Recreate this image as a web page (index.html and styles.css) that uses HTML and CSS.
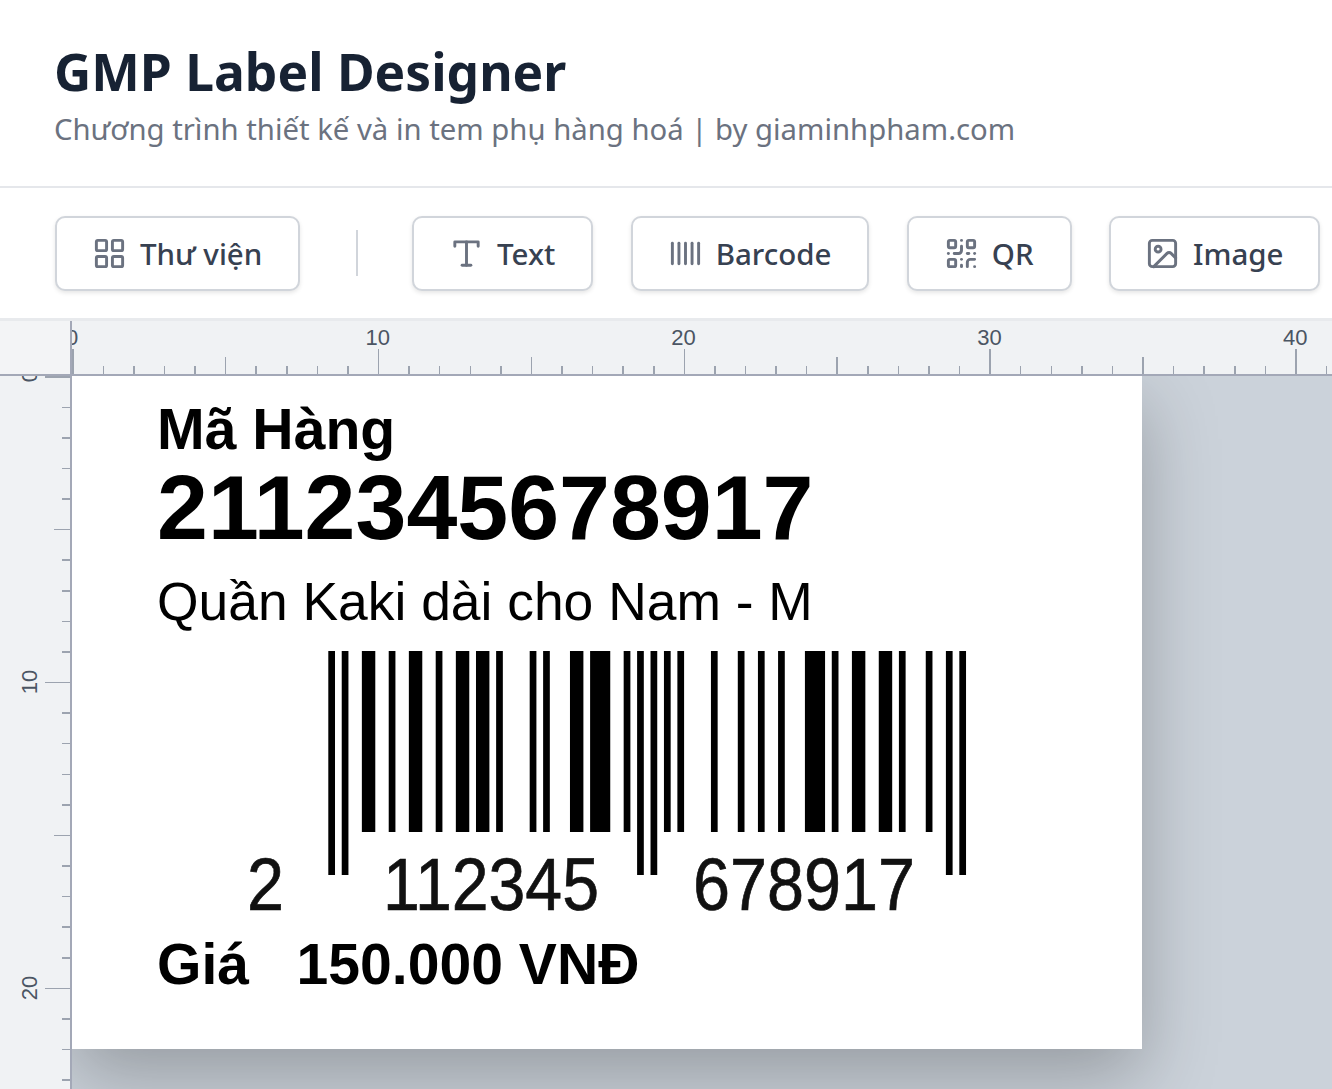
FILE: index.html
```html
<!DOCTYPE html>
<html lang="vi">
<head>
<meta charset="utf-8">
<title>GMP Label Designer</title>
<link rel="stylesheet" href="styles.css">
</head>
<body>
<div class="app">
  <header class="header">
    <h1 class="title">GMP Label Designer</h1>
    <p class="subtitle">Chương trình thiết kế và in tem phụ hàng hoá | by giaminhpham.com</p>
  </header>
  <nav class="toolbar">
    <button class="tool">
      <svg class="icon" viewBox="0 0 24 24"><rect x="3" y="3" width="7" height="7" rx="1"/><rect x="14" y="3" width="7" height="7" rx="1"/><rect x="14" y="14" width="7" height="7" rx="1"/><rect x="3" y="14" width="7" height="7" rx="1"/></svg>
      Thư viện
    </button>
    <span class="divider"></span>
    <button class="tool">
      <svg class="icon" viewBox="0 0 24 24"><path d="M4 7V4h16v3"/><path d="M9 20h6"/><path d="M12 4v16"/></svg>
      Text
    </button>
    <button class="tool">
      <svg class="icon" viewBox="0 0 24 24"><path d="M3 5v14"/><path d="M7.500 5v14"/><path d="M12 5v14"/><path d="M16.500 5v14"/><path d="M21 5v14"/></svg>
      Barcode
    </button>
    <button class="tool">
      <svg class="icon" viewBox="0 0 24 24"><rect x="3" y="3" width="5" height="5" rx="1"/><rect x="16" y="3" width="5" height="5" rx="1"/><rect x="3" y="16" width="5" height="5" rx="1"/><path d="M21 16h-3a2 2 0 0 0-2 2v3"/><path d="M21 21v.01"/><path d="M12 7v3a2 2 0 0 1-2 2H7"/><path d="M3 12h.01"/><path d="M12 3h.01"/><path d="M12 16v.01"/><path d="M16 12h1"/><path d="M21 12v.01"/><path d="M12 21v-1"/></svg>
      QR
    </button>
    <button class="tool tool-image">
      <svg class="icon" viewBox="0 0 24 24"><rect x="3" y="3" width="18" height="18" rx="2"/><circle cx="9" cy="9" r="2"/><path d="m21 15-3.086-3.086a2 2 0 0 0-2.828 0L6 21"/></svg>
      Image
    </button>
  </nav>
  <main class="workspace">
    <div class="corner"></div>
    <div class="ruler-top">
      <div class="hcell"><span>0</span></div>
      <div class="hcell"><span>10</span></div>
      <div class="hcell"><span>20</span></div>
      <div class="hcell"><span>30</span></div>
      <div class="hcell"><span>40</span></div>
    </div>
    <div class="ruler-left">
      <div class="vcell"><span>0</span></div>
      <div class="vcell"><span>10</span></div>
      <div class="vcell"><span>20</span></div>
    </div>
    <div class="canvas">
      <div class="label">
        <div class="el el-name">Mã Hàng</div>
        <div class="el el-code">2112345678917</div>
        <div class="el el-desc">Quần Kaki dài cho Nam - M</div>
        <svg class="el el-barcode" width="1000" height="262" viewBox="0 0 1000 262">
          <g transform="translate(256.300 0) scale(6.713 1)">
            <rect x="0" width="1" height="224"/><rect x="2" width="1" height="224"/>
            <rect x="5" width="2" height="181"/><rect x="9" width="1" height="181"/><rect x="12" width="2" height="181"/><rect x="16" width="1" height="181"/><rect x="19" width="2" height="181"/><rect x="22" width="2" height="181"/><rect x="25" width="1" height="181"/><rect x="30" width="1" height="181"/><rect x="32" width="1" height="181"/><rect x="36" width="2" height="181"/><rect x="39" width="3" height="181"/><rect x="44" width="1" height="181"/>
            <rect x="46" width="1" height="224"/><rect x="48" width="1" height="224"/>
            <rect x="50" width="1" height="181"/><rect x="52" width="1" height="181"/><rect x="57" width="1" height="181"/><rect x="61" width="1" height="181"/><rect x="64" width="1" height="181"/><rect x="67" width="1" height="181"/><rect x="71" width="3" height="181"/><rect x="75" width="1" height="181"/><rect x="78" width="2" height="181"/><rect x="82" width="2" height="181"/><rect x="85" width="1" height="181"/><rect x="89" width="1" height="181"/>
            <rect x="92" width="1" height="224"/><rect x="94" width="1" height="224"/>
          </g>
          <text class="bc-digits" x="175" y="259" textLength="37" lengthAdjust="spacingAndGlyphs">2</text>
          <text class="bc-digits" x="311" y="259" textLength="216" lengthAdjust="spacingAndGlyphs">112345</text>
          <text class="bc-digits" x="621" y="259" textLength="222" lengthAdjust="spacingAndGlyphs">678917</text>
        </svg>
        <div class="el el-price">Giá   150.000 VNĐ</div>
      </div>
    </div>
  </main>
</div>
</body>
</html>
```
FILE: styles.css
```css
* { box-sizing: border-box; }
html, body { margin: 0; height: 100%; overflow: hidden; background: #fff; }
.app { display: flex; flex-direction: column; height: 1089px; width: 1332px; overflow: hidden; font-family: "Noto Sans", "Open Sans", sans-serif; }

.header { height: 188px; flex: none; padding: 39px 54px 0; border-bottom: 2px solid #e5e7eb; }
.title { margin: 0; font-size: 51.500px; line-height: 64px; font-weight: 700; color: #172233; }
.subtitle { margin: 6px 0 0; font-size: 29.300px; line-height: 40px; color: #6b7280; white-space: nowrap; }

.toolbar { height: 130px; flex: none; display: flex; align-items: center; gap: 37.400px; padding: 0 55px; }
.tool { flex: none; height: 75px; display: flex; align-items: center; gap: 13px; padding: 0 36px; background: #fff; border: 2px solid #d1d5db; border-radius: 10px; box-shadow: 0 2px 4px rgba(0,0,0,.1); font-family: inherit; font-size: 29.500px; font-weight: 500; color: #374151; }
.tool-image { padding-right: 35px; padding-left: 35px; }
.icon { width: 35px; height: 35px; flex: none; margin-left: -1px; fill: none; stroke: #6b7280; stroke-width: 2; stroke-linecap: round; stroke-linejoin: round; }
.divider { flex: none; width: 2px; height: 46px; margin: 0 17px 0 18px; background: #d1d5db; }

.workspace { flex: 1; min-height: 0; display: grid; grid-template-columns: 72px 1fr; grid-template-rows: 55px 1fr; background: #f3f4f6; border-top: 3px solid #e8eaed; }
.corner { background: #f3f4f6; border-right: 2px solid #a3a8b7; border-bottom: 2px solid #a3a8b7; position: relative; z-index: 2; }
.ruler-top {
  display: flex; overflow: hidden; background-color: #f0f2f4; border-bottom: 2px solid #a3a8b7;
  background-image:
    repeating-linear-gradient(90deg, #9ca3af 0 1.5px, transparent 1.5px 305.8px),
    repeating-linear-gradient(90deg, #9ca3af 0 1.5px, transparent 1.5px 152.9px),
    repeating-linear-gradient(90deg, #9ca3af 0 1.5px, transparent 1.5px 30.58px);
  background-size: 100% 25px, 100% 17px, 100% 8px;
  background-position: 0 100%;
  background-repeat: no-repeat;
}
.hcell { flex: none; width: 305.8px; height: 34px; padding-top: 3px; font-family: "Liberation Sans", sans-serif; font-size: 22px; line-height: 28px; color: #4b5563; }
.hcell span { display: inline-block; transform: translateX(-50%); }
.ruler-left {
  overflow: hidden; background-color: #f0f2f4; border-right: 2px solid #a3a8b7;
  background-image:
    repeating-linear-gradient(180deg, #9ca3af 0 1.5px, transparent 1.5px 305.8px),
    repeating-linear-gradient(180deg, #9ca3af 0 1.5px, transparent 1.5px 152.9px),
    repeating-linear-gradient(180deg, #9ca3af 0 1.5px, transparent 1.5px 30.58px);
  background-size: 25px 100%, 16px 100%, 8px 100%;
  background-position: 100% 0;
  background-repeat: no-repeat;
}
.vcell { height: 305.8px; width: 60px; position: relative; font-family: "Liberation Sans", sans-serif; font-size: 22px; line-height: 28px; color: #4b5563; }
.vcell span { position: absolute; left: 30px; top: 0; transform: translate(-50%, -50%) rotate(-90deg); }

.canvas { position: relative; overflow: hidden; background: #cbd2da; }
.label { position: relative; width: 1070px; height: 673px; background: #fff; box-shadow: 0 28px 70px rgba(0,0,0,.26); font-family: "Liberation Sans", Arial, sans-serif; color: #000; }
.el { position: absolute; white-space: pre; }
.el-name { left: 85px; top: 21px; font-size: 57.200px; line-height: 64px; font-weight: 700; }
.el-code { left: 85px; top: 81px; font-size: 91.500px; line-height: 100px; font-weight: 700; }
.el-desc { left: 85px; top: 196px; font-size: 53.400px; line-height: 60px; }
.el-barcode { left: 0; top: 275px; filter: blur(.5px); }
.bc-digits { font-family: "Liberation Sans", Arial, sans-serif; font-size: 75px; fill: #111; stroke: #111; stroke-width: .7px; }
.el-price { left: 85px; top: 556px; font-size: 57.100px; line-height: 64px; font-weight: 700; }
```
